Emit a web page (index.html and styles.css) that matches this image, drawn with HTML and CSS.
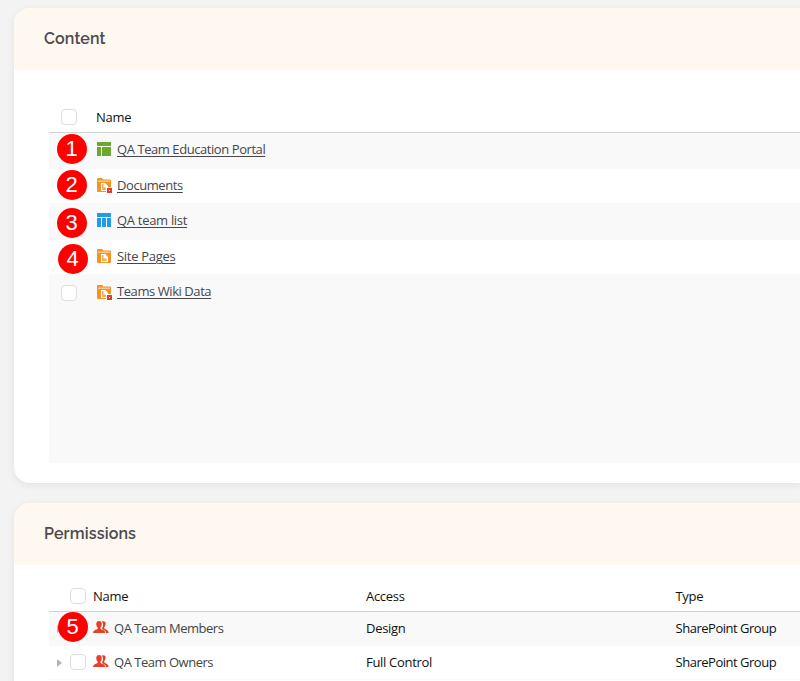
FILE: index.html
```html
<!DOCTYPE html>
<html lang="en">
<head>
<meta charset="utf-8">
<title>Content and Permissions</title>
<link rel="stylesheet" href="styles.css">
</head>
<body>
<svg class="defs" aria-hidden="true">
  <symbol id="portal" viewBox="0 0 15 15"><path fill="#6aaa2c" d="M0 0h14v4H0zM0 5h4v9H0zM5 5h9v9H5z"/></symbol>
  <symbol id="list" viewBox="0 0 15 15"><path fill="#219ce8" d="M0 0h14v4H0zM0 5h4v9H0zM5 5h4v9H5zM10 5h4v9h-4z"/></symbol>
  <symbol id="folder" viewBox="0 0 16 16"><path fill="#f39427" d="M1 0h4l1.500 1.500H13q1 0 1 1V13q0 1-1 1H1q-1 0-1-1V1q0-1 1-1z"/><path fill="#fff" d="M1 2.700h12v.8H1z"/><path fill="#fff" d="M4 5h4.200L11 8v5H4z"/><path fill="#f6ac58" d="M5 6h1.500v3.500h3V12H5z"/></symbol>
  <symbol id="folder-x" viewBox="0 0 16 16"><use href="#folder" width="16" height="16"/><path fill="#fff" d="M9 9h7v7H9z"/><path fill="#e23e26" d="M10 10h5v5h-5z"/><path fill="#fff" d="M12 12h1v1h-1z"/></symbol>
  <symbol id="people" viewBox="0 0 16 13"><path fill="#e44228" d="M8.5.5Q10.500-.3 12 .7q1 1 .4 3-.4 1.800-1.200 2.500v1q.6.9 2.300 1.600Q15.500 9.700 15.700 12h-2.500Q13 9.800 9.800 8.400L9 7.500q1.500-2.500.8-5Q9.500 1 8.500.5z"/><path fill="#e44228" d="M3.300 2Q3.700 0 6 0t2.700 2q.2 1 0 2Q8.400 5.600 7.500 6.400v1.300q.5.700 2.700 1.400 2 .8 2.100 2.900H0Q.1 9.900 2.100 9.100q2-.7 2.500-1.400V6.400Q3.600 5.600 3.300 4z"/></symbol>
</svg>
<main class="page">
  <section class="card content">
    <h2 class="title">Content</h2>
    <div class="table">
      <div class="row head"><i class="check"></i><span>Name</span></div>
      <div class="row"><i class="check hidden"></i><svg class="icon"><use href="#portal" width="15" height="15"/></svg><a class="tight">QA Team Education Portal</a><b class="badge b1">1</b></div>
      <div class="row low"><i class="check hidden"></i><svg class="icon"><use href="#folder-x" width="16" height="16"/></svg><a class="tight">Documents</a><b class="badge b2">2</b></div>
      <div class="row"><i class="check hidden"></i><svg class="icon"><use href="#list" width="15" height="15"/></svg><a>QA team list</a><b class="badge b3">3</b></div>
      <div class="row low"><i class="check hidden"></i><svg class="icon"><use href="#folder" width="16" height="16"/></svg><a>Site Pages</a><b class="badge b4">4</b></div>
      <div class="row last"><i class="check"></i><svg class="icon"><use href="#folder-x" width="16" height="16"/></svg><a class="tight">Teams Wiki Data</a></div>
    </div>
  </section>
  <section class="card permissions">
    <h2 class="title">Permissions</h2>
    <div class="table">
      <div class="prow head"><div class="who"><i class="check"></i><span>Name</span></div><span>Access</span><span>Type</span></div>
      <div class="prow shade"><div class="who"><i class="arrow"></i><i class="check hidden"></i><svg class="people"><use href="#people" width="16" height="13"/></svg><span class="group">QA Team Members</span></div><span>Design</span><span class="type">SharePoint Group</span><b class="badge b5">5</b></div>
      <div class="prow"><div class="who"><i class="arrow"></i><i class="check"></i><svg class="people"><use href="#people" width="16" height="13"/></svg><span class="group">QA Team Owners</span></div><span>Full Control</span><span class="type">SharePoint Group</span></div>
    </div>
  </section>
</main>
</body>
</html>
```
FILE: styles.css
```css
* { box-sizing: border-box; }
body { margin: 0; background: #f3f3f3; font: 13px/18px "Open Sans", "Noto Sans", sans-serif; letter-spacing: -0.3px; color: #111; }
.defs { position: absolute; width: 0; height: 0; }
.page { height: 681px; overflow: hidden; padding: 8px 0 0 14px; }
.card { background: #fff; border-radius: 16px 0 0 16px; box-shadow: 0 2px 8px rgba(0,0,0,.07); overflow: hidden; }
.content { height: 475px; margin-bottom: 20px; }
.permissions { height: 220px; }
.title { margin: 0; height: 62px; padding: 1px 30px 2px; background: #fff8f1; font: 600 16px/60px Raleway, Lato, "Open Sans", sans-serif; letter-spacing: .13px; color: #4b4b4f; }
.table { padding-left: 35px; }
.content .table { padding-top: 32px; }
.row { position: relative; display: flex; align-items: center; height: 35.5px; padding: 0 0 3px 12px; background: #f9f9f9; }
.row:nth-child(odd) { background: #fff; border-bottom: 1px solid #f9f9f9; }
.row.low { padding-bottom: 1px; }
.row.head { height: 31px; padding-bottom: 0; border-bottom: 1px solid #d2d2d2; }
.row.last { height: 188px; align-items: flex-start; padding-top: 7px; background: #f9f9f9; }
.check { flex: none; width: 16px; height: 16px; border: 1px solid #dedede; border-radius: 4px; background: #fff; }
.hidden { visibility: hidden; }
.row .check { margin-right: 20px; }
.row.head .check { margin-right: 19px; }
.last .check { margin-top: 3px; }
.icon { flex: none; width: 16px; height: 16px; margin: 1px 4px 0 0; }
.last .icon { margin-top: 3px; }
a { color: #46464c; text-decoration: underline; text-underline-offset: 2px; text-decoration-thickness: 1px; }
.tight { letter-spacing: -0.43px; }
.badge { position: absolute; width: 30px; height: 30px; border-radius: 50%; background: #f00; color: #fff; font: 22px/30px "Liberation Sans", sans-serif; letter-spacing: 0; text-align: center; left: 7.500px; }
.b1 { top: 0.500px; }
.b2 { top: 1.500px; }
.b3 { top: 3.500px; }
.b4 { top: 4px; left: 8.500px; }
.b5 { top: 0; left: 8.500px; }
.permissions .table { padding-top: 16px; }
.prow { position: relative; display: grid; grid-template-columns: 317px 309.500px 1fr; align-items: center; height: 34px; padding-bottom: 2px; border-bottom: 1px solid #f9f9f9; }
.prow.head { height: 31px; padding-bottom: 0; border-bottom: 1px solid #d2d2d2; }
.shade { background: #f9f9f9; }
.who { display: flex; align-items: center; padding-left: 8px; }
.arrow { width: 0; height: 0; border: solid transparent; border-width: 4px 0 4px 5px; border-left-color: #b5b5b8; margin: 2px 8px 0 0; }
.head .who { padding-left: 21px; }
.who .check { margin-right: 7px; }
.people { width: 16px; height: 13px; margin-right: 5px; }
.group, .type { letter-spacing: -0.48px; }
.group { color: #444; }
```
